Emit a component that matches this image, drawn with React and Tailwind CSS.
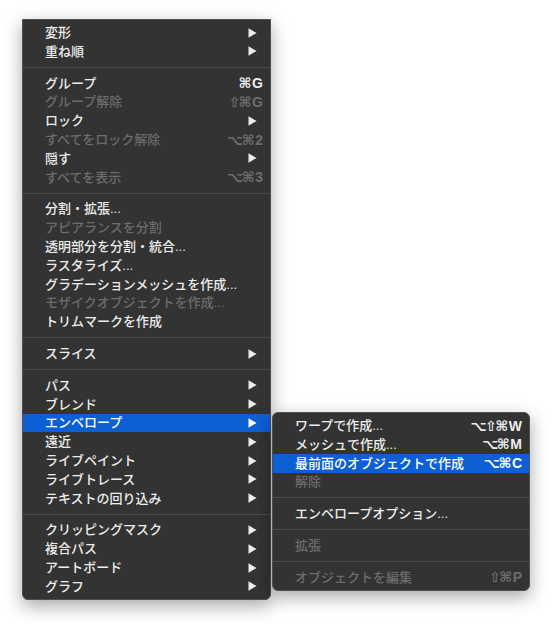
import React from "react";

const FONT = { fontFamily: '"Liberation Sans", "Noto Sans CJK JP", sans-serif' };
const SYM = { fontFamily: '"DejaVu Sans", "Liberation Sans", sans-serif' };
const LAT = { fontFamily: '"Liberation Sans", "DejaVu Sans", sans-serif' };

const mainItems = [
  { label: "変形", arrow: true },
  { label: "重ね順", arrow: true },
  "sep",
  { label: "グループ", sc: ["⌘", "G"] },
  { label: "グループ解除", sc: ["⇧", "⌘", "G"], disabled: true },
  { label: "ロック", arrow: true },
  { label: "すべてをロック解除", sc: ["⌥", "⌘", "2"], disabled: true },
  { label: "隠す", arrow: true },
  { label: "すべてを表示", sc: ["⌥", "⌘", "3"], disabled: true },
  "sep",
  { label: "分割・拡張..." },
  { label: "アピアランスを分割", disabled: true },
  { label: "透明部分を分割・統合..." },
  { label: "ラスタライズ..." },
  { label: "グラデーションメッシュを作成..." },
  { label: "モザイクオブジェクトを作成...", disabled: true },
  { label: "トリムマークを作成" },
  "sep",
  { label: "スライス", arrow: true },
  "sep",
  { label: "パス", arrow: true },
  { label: "ブレンド", arrow: true },
  { label: "エンベロープ", arrow: true, active: true },
  { label: "遠近", arrow: true },
  { label: "ライブペイント", arrow: true },
  { label: "ライブトレース", arrow: true },
  { label: "テキストの回り込み", arrow: true },
  "sep",
  { label: "クリッピングマスク", arrow: true },
  { label: "複合パス", arrow: true },
  { label: "アートボード", arrow: true },
  { label: "グラフ", arrow: true },
];

const subItems = [
  { label: "ワープで作成...", sc: ["⌥", "⇧", "⌘", "W"] },
  { label: "メッシュで作成...", sc: ["⌥", "⌘", "M"] },
  { label: "最前面のオブジェクトで作成", sc: ["⌥", "⌘", "C"], active: true },
  { label: "解除", disabled: true },
  "sep",
  { label: "エンベロープオプション..." },
  "sep",
  { label: "拡張", disabled: true },
  "sep",
  { label: "オブジェクトを編集", sc: ["⇧", "⌘", "P"], disabled: true },
];

const SYMS = ["⌘", "⇧", "⌥"];

function Arrow() {
  return (
    <svg width="9" height="10" viewBox="0 0 9 10" className="block">
      <path d="M0.5 0.3 L8.6 5 L0.5 9.7 Z" fill="currentColor" />
    </svg>
  );
}

function Row({ item }) {
  const color = item.active
    ? "bg-[#0d5fd6] text-white"
    : item.disabled
    ? "text-[#6c6c6c]"
    : "text-[#ededed]";
  return (
    <div className={`flex h-[18.8px] items-center pl-[22px] ${item.arrow ? "pr-[13px]" : "pr-[7px]"} ${color}`}>
      <span className="flex-1 whitespace-nowrap text-[13px] font-medium leading-none">{item.label}</span>
      {item.arrow && <Arrow />}
      {item.sc && (
        <span className="flex items-center leading-none">
          {item.sc.map((c, i) =>
            SYMS.includes(c) ? (
              <span key={i} className="text-[14px] font-bold tracking-[-1.5px]" style={SYM}>
                {c}
              </span>
            ) : (
              <span key={i} className="pl-[2px] text-[14px] font-bold" style={LAT}>
                {c}
              </span>
            )
          )}
        </span>
      )}
    </div>
  );
}

function Sep() {
  return (
    <div className="flex h-[13px] items-center">
      <div className="h-px w-full bg-[#4b4b4b]" />
    </div>
  );
}

function Menu({ items, className }) {
  return (
    <div className={`border border-[#4f4f4f] bg-[#333333] py-[3.2px] shadow-[0_6px_18px_rgba(0,0,0,0.35)] ${className}`} style={FONT}>
      {items.map((it, i) => (it === "sep" ? <Sep key={i} /> : <Row key={i} item={it} />))}
    </div>
  );
}

export default function App() {
  return (
    <div className="relative h-[624px] w-[557px] overflow-hidden bg-white">
      <div className="pl-[22px] pt-[19px]">
        <Menu items={mainItems} className="w-[249px] rounded-b-[6px]" />
      </div>
      <div className="absolute left-[272px] top-[412px]">
        <Menu items={subItems} className="w-[258px] rounded-[6px]" />
      </div>
    </div>
  );
}
